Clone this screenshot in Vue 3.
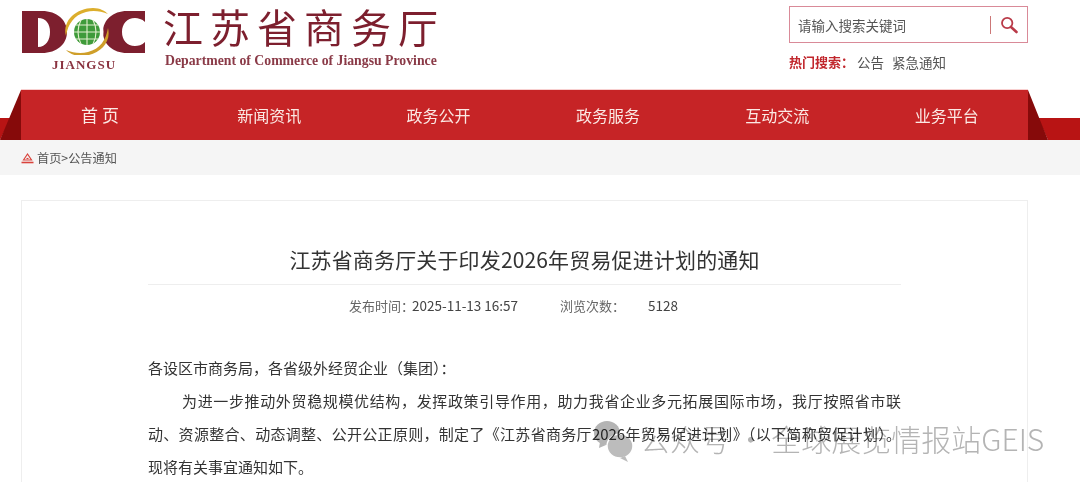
<template>
  <div class="page">
    <header class="top">
      <div class="brand">
        <div class="logo">
          <svg class="logo-mark" width="126" height="48" viewBox="0 -2 126 48">
            <path d="M1 2h20c15 0 25 9 25 21s-10 21-25 21H1zM17 9v29c8 0 12-7 12-15S25 9 17 9z" fill="#7d1f2e" fill-rule="evenodd" />
            <path d="M124 2H106c-14 0-24 9-24 21s10 21 24 21h18V33c-3 3-7 4-10 4-8 0-13-6-13-14s5-14 13-14c3 0 7 1 10 4z" fill="#7d1f2e" />
            <circle cx="66" cy="23" r="16.5" fill="#fff" />
            <path d="M45 27C41 11 56-1 72-1c7 0 12 3 15 6-7-3-15-4-22-2C53 6 47 15 45 27z" fill="#dcae2c" />
            <path d="M87 19c4 16-11 28-27 28-7 0-12-3-15-6 7 3 15 4 22 2 12-3 18-12 20-24z" fill="#cf9f2a" />
            <circle cx="66" cy="23" r="13" fill="#3f9b3a" />
            <path d="M53 23h26M55 16h22M55 30h22M66 10v26M60 11c-4 8-4 16 0 24M72 11c4 8 4 16 0 24" stroke="#e4f0cf" stroke-width="1.1" fill="none" />
          </svg>
          <div class="logo-sub">JIANGSU</div>
        </div>
        <div class="brand-text">
          <div class="brand-cn">江苏省商务厅</div>
          <div class="brand-en">Department of Commerce of Jiangsu Province</div>
        </div>
      </div>
      <div class="search-area">
        <div class="search-box">
          <span class="placeholder">请输入搜索关键词</span>
          <span class="divider"></span>
          <svg width="18" height="18" viewBox="0 0 18 18" fill="none" stroke="#b93a48">
            <circle cx="7.2" cy="7" r="5.2" stroke-width="1.8" />
            <path d="M11 11l5.5 5" stroke-width="2.6" stroke-linecap="round" />
          </svg>
        </div>
        <div class="hot">
          <b>热门搜索：</b>
          <span>公告</span>
          <span>紧急通知</span>
        </div>
      </div>
    </header>

    <nav class="nav">
      <svg class="wing wing-left" width="21" height="50" viewBox="0 0 21 50">
        <path d="M0 28h11L0 50z" fill="#b81414" />
        <path d="M21 0v50H0z" fill="#860a0a" />
      </svg>
      <div class="nav-bar">
        <a v-for="item in navItems" :key="item" class="nav-item">{{ item }}</a>
      </div>
      <svg class="wing wing-right" width="52" height="50" viewBox="0 0 52 50">
        <path d="M10 28h42v22H20z" fill="#b81414" />
        <path d="M0 0l20 50H0z" fill="#860a0a" />
      </svg>
    </nav>

    <div class="crumb">
      <svg width="13" height="12" viewBox="0 0 13 12" fill="none" stroke="#d9433c" stroke-width="1.2">
        <path d="M2.5 8L6.5 2l4 6z" />
        <path d="M5.5 6.5h2" />
        <path d="M0.5 10.5h12" stroke-width="1.6" />
      </svg>
      <span>首页&gt;公告通知</span>
    </div>

    <main class="card">
      <h1 class="title">江苏省商务厅关于印发2026年贸易促进计划的通知</h1>
      <div class="meta">
        <span class="meta-time">发布时间：<em>2025-11-13 16:57</em></span>
        <span class="meta-views">浏览次数：</span>
        <em class="meta-count">5128</em>
      </div>
      <div class="article">
        <p>各设区市商务局，各省级外经贸企业（集团）：</p>
        <p class="indent">为进一步推动外贸稳规模优结构，发挥政策引导作用，助力我省企业多元拓展国际市场，我厅按照省市联动、资源整合、动态调整、公开公正原则，制定了《江苏省商务厅2026年贸易促进计划》（以下简称贸促计划）。现将有关事宜通知如下。</p>
      </div>
    </main>

    <div class="watermark">
      <svg width="40" height="42" viewBox="0 0 40 42">
        <ellipse cx="13" cy="13" rx="13" ry="12" fill="#b4b4b4" />
        <path d="M6 22l-1 6 7-3z" fill="#b4b4b4" />
        <ellipse cx="26" cy="26" rx="13" ry="12" fill="#bcbcbc" stroke="#fff" stroke-width="1.5" />
        <path d="M31 36l3 6-8-4z" fill="#bcbcbc" />
      </svg>
      <span class="mark-text">公众号 · 全球展览情报站GEIS</span>
    </div>
  </div>
</template>

<script setup>
const navItems = ['首 页', '新闻资讯', '政务公开', '政务服务', '互动交流', '业务平台']
</script>

<style>
html,
body {
  margin: 0;
  background: #fff;
  overflow: hidden;
}
</style>

<style scoped>
.page {
  position: relative;
  width: 1080px;
  height: 482px;
  overflow: hidden;
  font-family: "Noto Sans CJK SC", "Noto Sans", sans-serif;
  color: #333;
}

.top {
  display: flex;
  justify-content: space-between;
  height: 90px;
  padding: 0 52px 0 21px;
  box-sizing: border-box;
}

.brand {
  display: flex;
  gap: 18px;
  padding-top: 4px;
}

.logo {
  padding-top: 3px;
}

.logo-mark {
  display: block;
}

.logo-sub {
  margin-top: 2px;
  text-align: center;
  font: bold 13px "Liberation Serif", serif;
  letter-spacing: 1px;
  color: #8a3340;
}

.brand-cn {
  font-size: 40px;
  line-height: 44px;
  letter-spacing: 7px;
  margin-left: -2px;
  color: #7d1f2e;
  white-space: nowrap;
}

.brand-en {
  margin-top: 5px;
  font: bold 13.75px "Liberation Serif", serif;
  color: #8a3a47;
  white-space: nowrap;
}

.search-area {
  width: 239px;
  padding-top: 6px;
}

.search-box {
  display: flex;
  align-items: center;
  height: 37px;
  padding: 0 9px 0 8px;
  border: 1px solid #d98a98;
  box-sizing: border-box;
}

.placeholder {
  flex: 1;
  font-size: 13.5px;
  color: #555;
}

.divider {
  width: 1px;
  height: 18px;
  margin-right: 9px;
  background: #c77;
}

.hot {
  display: flex;
  margin-top: 9px;
  font-size: 13.5px;
  color: #555;
}

.hot b {
  font-size: 13px;
  margin-right: 3px;
  color: #c1272d;
}

.hot span + span {
  margin-left: 8px;
}

.nav {
  position: relative;
  height: 50px;
}

.nav-bar {
  display: flex;
  width: 1007px;
  height: 50px;
  margin-left: 21px;
  background: #c62426;
  box-shadow: 0 -1px 0 #f8cfcf;
}

.nav-item {
  flex: none;
  width: 169.4px;
  line-height: 50px;
  text-align: center;
  font-size: 16px;
  color: #fbe9e4;
}

.nav-item:first-child {
  width: 163.5px;
  padding-right: 5.5px;
  box-sizing: border-box;
  font-size: 17px;
}

.wing {
  position: absolute;
  top: 0;
}

.wing-left {
  left: 0;
}

.wing-right {
  left: 1028px;
}

.crumb {
  display: flex;
  align-items: center;
  gap: 3px;
  height: 35px;
  padding-left: 21px;
  background: #f5f5f5;
  font-size: 12.2px;
  color: #555;
}

.card {
  width: 1007px;
  box-sizing: border-box;
  margin: 25px 0 0 21px;
  padding: 0 126px;
  height: 300px;
  border: 1px solid #eee;
}

.title {
  margin: 0;
  height: 83px;
  line-height: 117px;
  border-bottom: 1px solid #eee;
  text-align: center;
  font-size: 21px;
  font-weight: 400;
  letter-spacing: 0.15px;
  color: #333;
  white-space: nowrap;
}

.meta {
  display: flex;
  height: 40px;
  align-items: center;
  font-size: 13px;
  color: #666;
  padding-left: 201px;
}

.meta em {
  font-style: normal;
  font-size: 13.5px;
  color: #444;
}

.meta-time em {
  margin-left: -2px;
}

.meta-views {
  margin-left: 42px;
}

.meta-count {
  margin-left: 23px;
}

.article {
  margin-top: 26px;
  font-size: 15px;
  line-height: 33px;
  color: #333;
}

.article p {
  margin: 0;
  text-align: justify;
}

.article .indent {
  text-indent: 34px;
}

.watermark {
  position: absolute;
  left: 594px;
  top: 420px;
  display: flex;
  gap: 6px;
  font-size: 30px;
  font-weight: 300;
  word-spacing: -1px;
  color: #b4b4b4;
  white-space: nowrap;
  mix-blend-mode: multiply;
}

.mark-text {
  line-height: 36px;
}
</style>
